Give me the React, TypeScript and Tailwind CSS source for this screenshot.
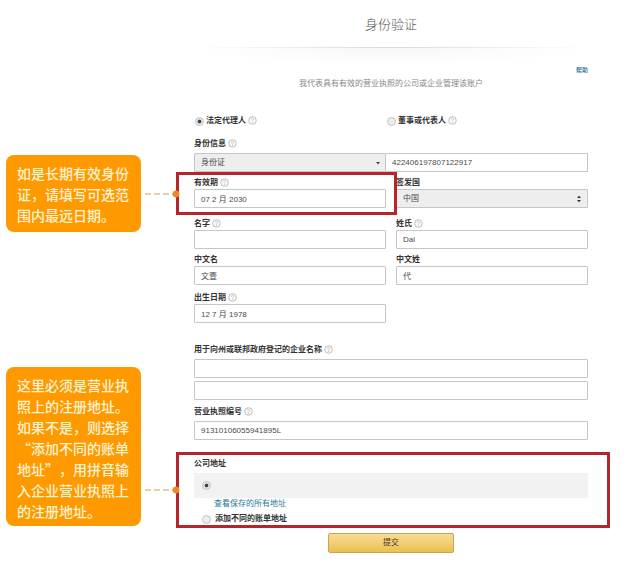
import type { ReactNode } from "react";

const control =
  "block h-[19px] w-full min-w-0 appearance-none rounded-[1px] border border-[#c6c6c6] px-[6px] text-[8px] leading-[17px] text-[#4a4a4a] outline-none";

function HelpIcon() {
  return (
    <svg viewBox="0 0 18 18" className="mb-[2px] size-[9px] shrink-0" aria-hidden="true">
      <circle cx="9" cy="9" r="7.6" fill="#fafafa" stroke="#b4b4b4" strokeWidth="1.7" />
      <path d="M6.8 7.2a2.2 2.2 0 1 1 3.3 1.9c-.8.5-1.1.8-1.1 1.7" fill="none" stroke="#b8b8b8" strokeWidth="1.5" />
      <circle cx="9" cy="13" r="1" fill="#b8b8b8" />
    </svg>
  );
}

function Label({ id, children, help }: { id: string; children: ReactNode; help?: boolean }) {
  return (
    <div className="flex h-3 items-center gap-[2px]">
      <label htmlFor={id} className="text-[8px] leading-3 font-bold whitespace-nowrap text-[#333]">
        {children}
      </label>
      {help && <HelpIcon />}
    </div>
  );
}

function Field({ id, label, value = "", help }: { id: string; label: string; value?: string; help?: boolean }) {
  return (
    <div>
      <Label id={id} help={help}>
        {label}
      </Label>
      <input id={id} type="text" defaultValue={value} className={`${control} bg-white`} />
    </div>
  );
}

function Radio({ id, name, checked, label }: { id: string; name: string; checked?: boolean; label?: string }) {
  return (
    <input
      id={id}
      type="radio"
      name={name}
      defaultChecked={checked}
      aria-label={label}
      className="size-[9px] shrink-0 appearance-none rounded-full border border-[#c4c4c4] bg-[#ededed] checked:bg-[radial-gradient(circle,#444_0_1.6px,#e4e4e4_2.2px)]"
    />
  );
}

function Callout({ children, className }: { children: ReactNode; className: string }) {
  return (
    <p
      className={`rounded-[8px] bg-[#fe9900] px-[11px] pt-2 font-['Noto_Sans_CJK_SC',sans-serif] text-[14px] leading-[21px] font-medium whitespace-nowrap text-[#fff3d2] [text-spacing-trim:space-all] ${className}`}
    >
      {children}
    </p>
  );
}

function Frame({ className }: { className: string }) {
  return (
    <div className={`pointer-events-none absolute border-3 border-[#b5262c] ${className}`}>
      <svg viewBox="0 0 36 8" className="absolute top-1/2 -left-[35px] h-2 w-9 -translate-y-1/2" aria-hidden="true">
        <path d="M1 4H30" stroke="#d0a550" strokeWidth="1.2" strokeDasharray="6 3" />
        <circle cx="32" cy="4" r="3.4" fill="#ec8a24" />
      </svg>
    </div>
  );
}

export default function App() {
  return (
    <div className="flex min-h-screen items-start bg-white pr-[47px] pl-[6px] font-['Liberation_Sans','Noto_Sans_CJK_SC',sans-serif]">
      <aside className="flex w-[135px] shrink-0 flex-col gap-[135px] pt-[155px]">
        <Callout className="pb-[6px]">
          如是长期有效身份
          <br />
          证，请填写可选范
          <br />
          围内最远日期。
        </Callout>
        <Callout className="pb-1">
          这里必须是营业执
          <br />
          照上的注册地址。
          <br />
          如果不是，则选择
          <br />
          “添加不同的账单
          <br />
          地址”，用拼音输
          <br />
          入企业营业执照上
          <br />
          的注册地址。
        </Callout>
      </aside>

      <main className="ml-[53px] min-w-0 flex-1 text-[8px] leading-3">
        <header className="flex flex-col pt-4">
          <h1 className="text-center text-[13px] leading-[18px] font-light text-[#555]">身份验证</h1>
          <div className="mt-[13px] h-px bg-linear-to-r from-transparent via-[#dadada] to-transparent" />
          <div className="h-4 bg-[radial-gradient(ellipse_50%_100%_at_top,#f7f7f7,#ffffff)]" />
          <a href="#help" className="self-end text-[6px] leading-3 font-medium text-[#28668e]">
            帮助
          </a>
          <p className="mt-[2px] text-center leading-3 whitespace-nowrap text-[#888]">
            我代表具有有效的营业执照的公司或企业管理该账户
          </p>
        </header>

        <form onSubmit={(e) => e.preventDefault()}>
          <div className="mt-[25px] grid grid-cols-2 gap-x-[10px]">
            <div className="flex h-3 items-center gap-[2px] pl-px">
              <Radio id="agent" name="role" checked />
              <label htmlFor="agent" className="font-bold whitespace-nowrap text-[#333]">
                法定代理人
              </label>
              <HelpIcon />
            </div>
            <div className="-ml-[9px] flex h-3 items-center gap-[2px]">
              <Radio id="director" name="role" />
              <label htmlFor="director" className="font-bold whitespace-nowrap text-[#333]">
                董事或代表人
              </label>
              <HelpIcon />
            </div>
          </div>

          <div className="mt-[11px] flex flex-col gap-[3px]">
            <Label id="idtype" help>
              身份信息
            </Label>
            <div className="flex">
              <div className="relative w-[calc(50%-5px)] shrink-0">
                <select id="idtype" className={`${control} bg-[#eeeeee]`}>
                  <option>身份证</option>
                </select>
                <svg viewBox="0 0 6 4" className="absolute top-2 right-[5px] h-1 w-[6px]" aria-hidden="true">
                  <path d="M1 1h4L3 3.5z" fill="#444" />
                </svg>
              </div>
              <input type="text" aria-label="证件号码" defaultValue="422406197807122917" className={`${control} border-l-0 bg-white`} />
            </div>
          </div>

          <div className="relative mt-[5px] grid grid-cols-2 gap-x-[10px]">
            <Field id="expiry" label="有效期" value="07 2 月 2030" help />
            <div>
              <Label id="country">签发国</Label>
              <div className="relative">
                <select id="country" className={`${control} bg-[#eeeeee]`}>
                  <option>中国</option>
                </select>
                <svg viewBox="0 0 6 8" className="absolute top-[6px] right-[6px] h-2 w-[6px]" aria-hidden="true">
                  <path d="M1 3h4L3 .7zM1 5h4L3 7.3z" fill="#333" />
                </svg>
              </div>
            </div>
            <Frame className="-top-[5px] right-[calc(50%-6px)] -bottom-[7px] -left-[18px]" />
          </div>

          <div className="mt-[10px] grid grid-cols-2 gap-x-[10px] gap-y-[5px]">
            <Field id="given" label="名字" help />
            <Field id="family" label="姓氏" value="Dai" help />
            <Field id="given-cn" label="中文名" value="文壹" />
            <Field id="family-cn" label="中文姓" value="代" />
          </div>

          <div className="mt-[7px] grid grid-cols-2 gap-x-[10px]">
            <Field id="birth" label="出生日期" value="12 7 月 1978" help />
          </div>

          <div className="mt-[21px] flex flex-col gap-[3px]">
            <Label id="company" help>
              用于向州或联邦政府登记的企业名称
            </Label>
            <input id="company" type="text" className={`${control} bg-white`} />
            <input type="text" aria-label="企业名称（续）" className={`${control} bg-white`} />
          </div>

          <div className="mt-[6px] flex flex-col gap-[3px]">
            <Label id="license" help>
              营业执照编号
            </Label>
            <input id="license" type="text" defaultValue="91310106055941895L" className={`${control} bg-white`} />
          </div>

          <div className="relative mt-[18px]">
            <fieldset>
              <legend className="text-[8px] leading-3 font-bold text-[#333]">公司地址</legend>
              <div className="mt-[3px] flex h-[25px] items-center bg-[#f2f2f2] pl-2">
                <Radio id="saved" name="address" checked label="已保存的地址" />
              </div>
              <a href="#addresses" className="ml-5 block w-fit leading-3 text-[#2a7599]">
                查看保存的所有地址
              </a>
              <div className="mt-[3px] flex h-3 items-center gap-1 pl-2">
                <Radio id="other" name="address" />
                <label htmlFor="other" className="font-bold text-[#333]">
                  添加不同的账单地址
                </label>
              </div>
            </fieldset>
            <Frame className="-top-[6px] -right-[22px] -bottom-[3px] -left-[18px]" />
          </div>

          <button
            type="submit"
            className="mx-auto mt-2 block h-5 w-[126px] rounded-[2px] border border-[#c5a55a] bg-linear-to-b from-[#f8dc94] to-[#ecc04e] text-[8px] leading-[18px] text-[#4b3a16]"
          >
            提交
          </button>
        </form>
      </main>
    </div>
  );
}
